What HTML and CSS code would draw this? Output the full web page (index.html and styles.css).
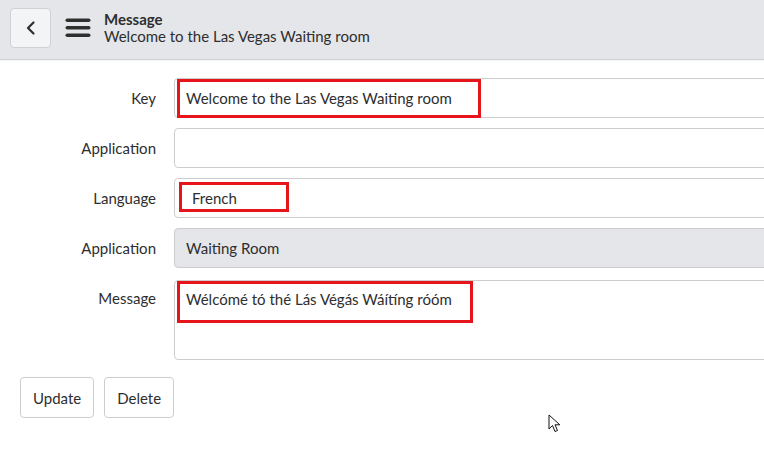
FILE: index.html
```html
<!DOCTYPE html>
<html>
<head>
<meta charset="utf-8">
<link rel="stylesheet" href="styles.css">
</head>
<body>
<header class="topbar">
  <button class="back-btn" aria-label="Back">
    <svg width="12" height="16" viewBox="0 0 12 16"><path d="M8.5 2.5 L3 8 L8.5 13.5" fill="none" stroke="#2e2e2e" stroke-width="2.2" stroke-linecap="round" stroke-linejoin="round"/></svg>
  </button>
  <svg class="menu-icon" width="26" height="20" viewBox="0 0 26 20"><rect x="0.5" y="0.5" width="25" height="3.6" rx="1.8" fill="#2e2e2e"/><rect x="0.5" y="8" width="25" height="3.6" rx="1.8" fill="#2e2e2e"/><rect x="0.5" y="15.5" width="25" height="3.6" rx="1.8" fill="#2e2e2e"/></svg>
  <div class="titles">
    <div class="title">Message</div>
    <div class="subtitle">Welcome to the Las Vegas Waiting room</div>
  </div>
</header>
<main class="form">
  <div class="row">
    <label class="lbl">Key</label>
    <div class="field"><span class="val">Welcome to the Las Vegas Waiting room</span><span class="mark mark-key"></span></div>
  </div>
  <div class="row">
    <label class="lbl">Application</label>
    <div class="field"></div>
  </div>
  <div class="row">
    <label class="lbl">Language</label>
    <div class="field"><span class="val val-lang">French</span><span class="mark mark-lang"></span></div>
  </div>
  <div class="row">
    <label class="lbl">Application</label>
    <div class="field readonly"><span class="val">Waiting Room</span></div>
  </div>
  <div class="row row-top">
    <label class="lbl">Message</label>
    <div class="field area"><span class="val">Wélcómé tó thé Lás Végás Wáítíng róóm</span><span class="mark mark-msg"></span></div>
  </div>
  <div class="actions">
    <button class="btn">Update</button>
    <button class="btn">Delete</button>
  </div>
</main>
<svg class="cursor" width="14" height="20" viewBox="0 0 14 20"><path d="M1 1 L1 15 L4.5 11.5 L7 17.5 L9.5 16.5 L7 10.8 L11.8 10.8 Z" fill="#fff" stroke="#111" stroke-width="1" stroke-linejoin="round"/></svg>
</body>
</html>
```
FILE: styles.css
```css
* { box-sizing: border-box; }
html, body { margin: 0; padding: 0; }
body {
  width: 764px;
  height: 466px;
  overflow: hidden;
  background: #fff;
  font-family: Lato, "Noto Sans", sans-serif;
  font-size: 15px;
  color: #2e2e2e;
  position: relative;
}
.topbar {
  height: 60px;
  background: #e4e6e9;
  border-bottom: 1px solid #cfd0d2;
  box-shadow: 0 1px 2px rgba(0,0,0,0.06);
  display: flex;
  align-items: center;
  padding-left: 10px;
}
.back-btn {
  width: 41px;
  height: 40px;
  border: 1px solid #cfd1d4;
  border-radius: 4px;
  background: #f3f4f6;
  display: flex;
  align-items: center;
  justify-content: center;
  padding: 0;
  margin-top: -4px;
}
.menu-icon { margin-left: 14px; margin-top: -3px; }
.titles { margin-left: 13px; margin-top: -4px; line-height: 17px; }
.title { font-weight: 700; font-size: 15px; }
.subtitle { font-size: 15px; }
.form { padding-top: 18px; }
.row {
  display: grid;
  grid-template-columns: 156px 620px;
  column-gap: 18px;
  align-items: center;
  margin-bottom: 10px;
}
.row-top { align-items: start; padding-top: 2px; }
.lbl { text-align: right; }
.row-top .lbl { padding-top: 9px; }
.field {
  position: relative;
  height: 40px;
  border: 1px solid #cdcdcd;
  border-radius: 4px;
  background: #fff;
  display: flex;
  align-items: center;
  padding-left: 11px;
}
.field.readonly { background: #e4e6e9; }
.field.area { height: 80px; align-items: flex-start; padding-top: 9px; }
.val-lang { padding-left: 6px; }
.mark {
  position: absolute;
  border: 3px solid #e8141c;
}
.mark-key { left: 2px; top: 0; width: 304px; height: 39px; }
.mark-lang { left: 4px; top: 3px; width: 110px; height: 30px; }
.mark-msg { left: 2px; top: 0; width: 296px; height: 42px; }
.actions {
  display: flex;
  gap: 10px;
  padding-left: 20px;
  margin-top: 17px;
}
.btn {
  height: 41px;
  padding: 0 12px;
  border: 1px solid #cdcdcd;
  border-radius: 4px;
  background: #fff;
  font-family: inherit;
  font-size: 15px;
  color: #2e2e2e;
}
.cursor { position: absolute; left: 548px; top: 414px; }
```
